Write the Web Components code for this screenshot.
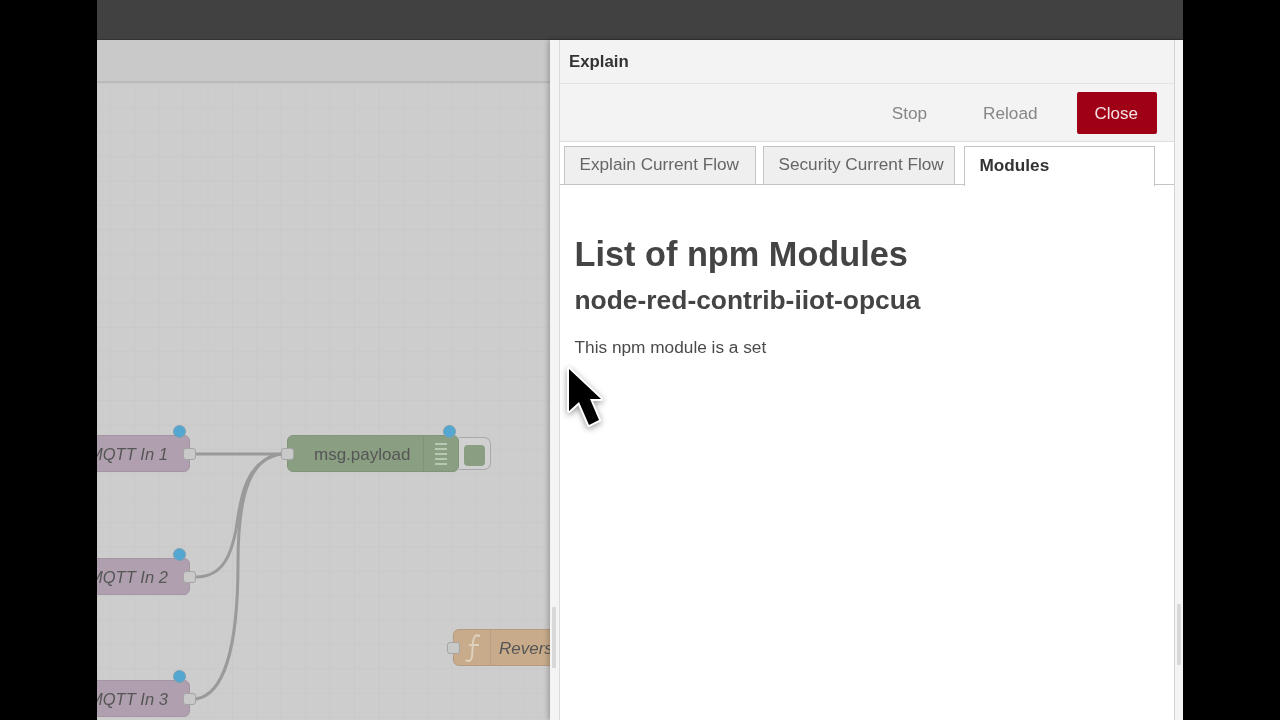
<!DOCTYPE html>
<html lang="en"><head><meta charset="utf-8"><title>Explain</title>
<style>
html,body{margin:0;height:100%;background:#000;overflow:hidden;font-family:"Liberation Sans",Arial,sans-serif}
</style></head><body>
<template id="t-app"><style>
:host{display:flex;flex-direction:column;width:1086px;height:720px;margin-left:97px;position:relative;overflow:hidden;filter:blur(.35px)}
.main{display:flex;flex:1;min-height:0}
</style><slot name="header"></slot><div class="main"><slot></slot></div><slot name="pointer"></slot></template>

<template id="t-header"><style>
:host{display:block;height:39px;flex:none;background:#414141;border-bottom:1px solid #333}
</style></template>

<template id="t-workspace"><style>
:host{display:flex;flex-direction:column;width:453px;flex:none;background:#cbcbcb;min-height:0}
.tabs{flex:none;background:#c9c9c9;border-bottom:2px solid #bababa;height:41px}
.canvas{flex:1;position:relative;overflow:hidden;
 background-color:#cdcdcd;
 background-image:linear-gradient(#c9c9c9 1px,transparent 1px),linear-gradient(90deg,#c9c9c9 1px,transparent 1px);
 background-size:24.4px 24.4px;background-position:13px 0}
</style><div class="tabs"></div><div class="canvas"><slot></slot></div></template>

<template id="t-wires"><style>
:host{position:absolute;left:0;top:0;width:453px;height:637px;display:block}
svg{display:block}
path{fill:none;stroke:#9a9a9a;stroke-width:3}
</style><svg width="453" height="637" viewBox="0 0 453 637">
<path d="M99 371H184"/>
<path d="M99 494C128 494 135 467 139 447C143 417 148 377 184 371"/>
<path d="M99 616C125 612 141 570 141 480C141 420 150 375 184 371"/>
</svg></template>

<template id="t-node"><style>
:host{position:absolute;display:block;height:37px;left:var(--x);top:var(--y);width:var(--w);font-size:var(--fs,16.500px);color:#565656}
.body{position:absolute;inset:0;background:var(--c);border:1px solid var(--b);box-sizing:border-box;border-radius:6px;display:flex;align-items:center;overflow:hidden}
.label{white-space:nowrap;position:absolute;left:var(--tx);top:0;line-height:37px}
:host([italic]) .label{font-style:italic}
.sep{position:absolute;top:0;bottom:0;left:var(--sep);width:1px;background:rgba(0,0,0,.07);display:none}
:host([sep]) .sep{display:block}
.ic{position:absolute;left:var(--ix,0);top:0;height:100%;display:flex;align-items:center}
.port{display:none;position:absolute;top:13px;width:13px;height:12px;background:#c9c9c9;border:1px solid #a5a5a5;box-sizing:border-box;border-radius:3px}
:host([in]) .port.i{display:block;left:-6px}
:host([out]) .port.o{display:block;right:-6px}
.dot{display:none;position:absolute;top:-10px;right:var(--dr,4px);width:13px;height:13px;box-sizing:border-box;border-radius:50%;background:#53a7d0;border:1px solid #7ca0b1}
:host([status]) .dot{display:block}
.btn{display:none;position:absolute;left:100%;top:2px;width:32px;height:33px;box-sizing:border-box;border:1px solid #a9a9a9;border-left:0;border-radius:0 7px 7px 0;background:#d0d0d0}
.btn i{position:absolute;left:5px;top:7px;width:21px;height:21px;border-radius:4px;background:var(--c)}
:host([button]) .btn{display:block}
</style><div class="btn"><i></i></div><div class="body"><span class="label"><slot></slot></span><span class="sep"></span><span class="ic"><slot name="icon"></slot></span></div><span class="port i"></span><span class="port o"></span><span class="dot"></span></template>

<template id="t-tray"><style>
:host{display:flex;flex-direction:column;flex:1;min-width:0;position:relative;background:#f4f4f4;padding:0 8px 0 9px;box-shadow:-2px 0 5px rgba(0,0,0,.22);z-index:1}
.inner{flex:1;display:flex;flex-direction:column;background:#fff;border-left:1px solid #dcdcdc;border-right:1px solid #d4d4d4;min-height:0}
.head{height:43px;flex:none;background:#f3f3f3;border-bottom:1px solid #e3e3e3;padding-left:9px;font-weight:700;font-size:16.800px;line-height:43px;color:#333}
.bar{height:57px;flex:none;background:#f3f3f3;border-bottom:1px solid #dedede;display:flex;align-items:center;justify-content:flex-end;padding-right:17px}
.thumb{position:absolute;top:567px;width:4px;height:61px;background:#d8d8d8;border-radius:1px}
.thumb.l{left:2px}.thumb.r{right:2px;top:564px}
</style><div class="inner"><div class="head"><slot name="title"></slot></div><div class="bar"><slot name="actions"></slot></div><slot></slot></div><span class="thumb l"></span><span class="thumb r"></span></template>

<template id="t-btn"><style>
:host{display:block;font-size:17.200px;line-height:43px;height:42px;color:#868686;padding:0 18px;margin-left:var(--ml,0)}
:host([primary]){background:#a00016;color:#f4e3e5;border-radius:2px;padding:0 19px 0 18px;font-size:17px}
</style><slot></slot></template>

<template id="t-tabs"><style>
:host{display:flex;flex:none;height:43px;box-sizing:border-box;padding:4px 0 0 4px;gap:7px;background:#fff;border-bottom:1px solid #c4c4c4}
</style><slot></slot></template>

<template id="t-tab"><style>
:host{display:block;width:192px;height:38px;box-sizing:border-box;border:1px solid #c4c4c4;border-bottom:0;background:#efefef;color:#666;font-size:17.200px;line-height:35px;padding-left:14.500px;white-space:nowrap;overflow:hidden}
:host([active]){background:#fff;color:#333;font-weight:700;height:40px;line-height:37px;width:191px;margin-left:2px}
</style><slot></slot></template>

<template id="t-doc"><style>
:host{display:block;padding:0 14.500px;color:#444}
h1{font-size:34.300px;line-height:38px;margin:50px 0 0;font-weight:700}
h2{font-size:26.400px;line-height:30px;margin:12px 0 0;font-weight:700}
p{font-size:17.250px;line-height:22px;margin:21px 0 0;color:#4a4a4a}
</style><h1>List of npm Modules</h1><h2>node-red-contrib-iiot-opcua</h2><p>This npm module is a set</p></template>

<template id="t-pointer"><style>
:host{position:absolute;left:471px;top:368px;width:44px;height:62px;display:block;z-index:5}
svg{display:block;overflow:visible;filter:drop-shadow(0 2px 3px rgba(0,0,0,.4))}
</style><svg width="44" height="62" viewBox="0 0 44 62"><path d="M1 1V43L11 34L21 57L31 52L22 31H33Z" fill="#000" stroke="#fff" stroke-width="4" stroke-linejoin="round" paint-order="stroke"/></svg></template>

<nr-app>
 <nr-header slot="header"></nr-header>
 <nr-workspace>
  <nr-wires></nr-wires>
  <nr-node italic out status style="--x:-40px;--y:352px;--w:133px;--c:#b0a0af;--b:#a395a3;--tx:31px">MQTT In 1</nr-node>
  <nr-node italic out status style="--x:-40px;--y:475px;--w:133px;--c:#b0a0af;--b:#a395a3;--tx:31px">MQTT In 2</nr-node>
  <nr-node italic out status style="--x:-40px;--y:597px;--w:133px;--c:#b0a0af;--b:#a395a3;--tx:31px">MQTT In 3</nr-node>
  <nr-node in status button sep style="--x:190px;--y:352px;--w:172px;--c:#8a9e82;--b:#81947a;--tx:26px;--sep:135px;--ix:147px;--dr:3px;--fs:17px">msg.payload
   <svg slot="icon" width="12" height="22" viewBox="0 0 12 22"><path d="M0 1H12M0 6H12M0 11H12M0 16H12M0 21H12" stroke="#c9d6c3" stroke-width="1.300" fill="none"/></svg>
  </nr-node>
  <nr-node italic in sep style="--x:356px;--y:546px;--w:140px;--c:#c8ab8b;--b:#b59a7d;--tx:45px;--sep:36px;--ix:10px;--fs:17px">Reverse
   <svg slot="icon" width="18" height="30" viewBox="0 0 18 30"><path d="M16 3C11 1 9.500 4 9 9L8 24C7.500 28 4 29 2 27M5 12H15" stroke="#ddd0bc" stroke-width="2" fill="none"/></svg>
  </nr-node>
 </nr-workspace>
 <nr-tray>
  <span slot="title">Explain</span>
  <nr-btn slot="actions">Stop</nr-btn>
  <nr-btn slot="actions" style="--ml:20px">Reload</nr-btn>
  <nr-btn slot="actions" primary style="--ml:21px">Close</nr-btn>
  <nr-tabs><nr-tab>Explain Current Flow</nr-tab><nr-tab>Security Current Flow</nr-tab><nr-tab active>Modules</nr-tab></nr-tabs>
  <nr-doc></nr-doc>
 </nr-tray>
 <nr-pointer slot="pointer"></nr-pointer>
</nr-app>
<script>
for(const [tag,id] of [['nr-app','t-app'],['nr-header','t-header'],['nr-workspace','t-workspace'],['nr-wires','t-wires'],['nr-node','t-node'],['nr-tray','t-tray'],['nr-btn','t-btn'],['nr-tabs','t-tabs'],['nr-tab','t-tab'],['nr-doc','t-doc'],['nr-pointer','t-pointer']]){
 customElements.define(tag,class extends HTMLElement{constructor(){super();this.attachShadow({mode:'open'}).appendChild(document.getElementById(id).content.cloneNode(true));}});
}
</script>
</body></html>
